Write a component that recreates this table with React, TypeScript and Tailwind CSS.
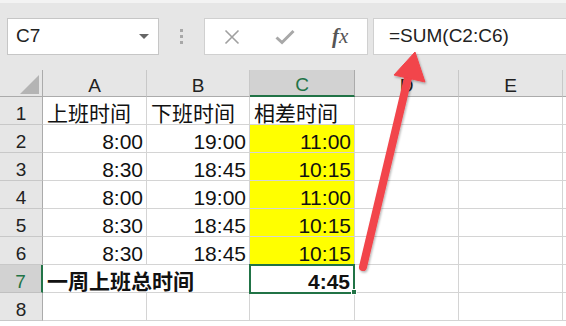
import React from "react";

const FONT = { fontFamily: '"Liberation Sans", "Noto Sans CJK SC", sans-serif' };

const cols = ["A", "B", "C", "D", "E"];

type Row = { n: number; a?: string; b?: string; c?: string; head?: boolean; fill?: boolean };

const rows: Row[] = [
  { n: 1, a: "上班时间", b: "下班时间", c: "相差时间", head: true },
  { n: 2, a: "8:00", b: "19:00", c: "11:00", fill: true },
  { n: 3, a: "8:30", b: "18:45", c: "10:15", fill: true },
  { n: 4, a: "8:00", b: "19:00", c: "11:00", fill: true },
  { n: 5, a: "8:30", b: "18:45", c: "10:15", fill: true },
  { n: 6, a: "8:30", b: "18:45", c: "10:15", fill: true },
  { n: 7 },
  { n: 8 },
];

function Toolbar() {
  return (
    <div className="h-[70px] bg-[#e6e6e6] border-t-[3px] border-[#f3f3f3] flex items-start pt-[15px]">
      <div className="ml-[7px] w-[152px] h-[37px] bg-white border border-[#c6c6c6] flex items-center justify-between pl-[8px] pr-[9px]">
        <span className="text-[19px] text-[#222]">C7</span>
        <svg width="10" height="6" viewBox="0 0 10 6">
          <path d="M0 0 L10 0 L5 5 Z" fill="#666" />
        </svg>
      </div>
      <div className="w-[45px] h-[37px] flex flex-col items-center justify-center gap-[3px]">
        <div className="w-[3px] h-[3px] bg-[#a8a8a8]" />
        <div className="w-[3px] h-[3px] bg-[#a8a8a8]" />
        <div className="w-[3px] h-[3px] bg-[#a8a8a8]" />
      </div>
      <div className="w-[164px] h-[37px] bg-white border border-[#d0d0d0] flex items-center">
        <svg width="16" height="16" viewBox="0 0 16 16" className="ml-[19px]">
          <path d="M1.5 1.5 L14.5 14.5 M14.5 1.5 L1.5 14.5" stroke="#a0a0a0" strokeWidth="1.6" />
        </svg>
        <svg width="20" height="16" viewBox="0 0 20 16" className="ml-[35px]">
          <path d="M1.5 8.5 L7 13.5 L18.5 2" stroke="#a8a8a8" strokeWidth="3" fill="none" />
        </svg>
        <span
          className="ml-[37px] text-[21px] italic text-[#555] leading-none"
          style={{ fontFamily: '"Liberation Serif", serif' }}
        >
          <span className="font-bold">f</span>x
        </span>
      </div>
      <div className="ml-[5px] flex-1 h-[37px] bg-white border border-[#d0d0d0] border-r-0 flex items-center pl-[15px]">
        <span className="text-[19px] text-[#222]">=SUM(C2:C6)</span>
      </div>
    </div>
  );
}

function Arrow() {
  return (
    <svg className="absolute left-0 top-0 pointer-events-none" width="566" height="326" viewBox="0 0 566 326">
      <defs>
        <filter id="sh" x="-20%" y="-20%" width="140%" height="140%">
          <feDropShadow dx="1" dy="1.5" stdDeviation="1.2" floodColor="#000" floodOpacity="0.3" />
        </filter>
      </defs>
      <g filter="url(#sh)" fill="#f2444b" stroke="#f2444b">
        <line x1="363" y1="267" x2="408" y2="78" strokeWidth="8" strokeLinecap="round" />
        <path d="M415 52 L425 82 L394 75 Z" strokeWidth="1" strokeLinejoin="round" />
      </g>
    </svg>
  );
}

const cell =
  "h-[28px] flex items-end border-r border-b border-[#d4d4d4] text-[21px] leading-[21px] text-[#111] whitespace-nowrap";

export default function App() {
  return (
    <div className="relative w-[566px] h-[326px] overflow-hidden bg-white" style={FONT}>
      <Toolbar />
      <div className="grid grid-cols-[43px_104px_103px_105px_104px_104px_1fr]">
        {/* column headers */}
        <div className="h-[27px] bg-[#e6e6e6] border-r border-b border-[#ababab] relative">
          <svg className="absolute left-[20px] top-[5px]" width="19" height="19" viewBox="0 0 19 19">
            <path d="M19 0 L19 19 L0 19 Z" fill="#b4b4b4" />
          </svg>
        </div>
        {cols.map((c) => (
          <div
            key={c}
            className={
              c === "C"
                ? "h-[27px] flex items-end justify-center bg-[#d2d2d2] border-r border-[#ababab] border-b-2 border-b-[#217346] text-[#217346] text-[19px] leading-[19px] pb-px"
                : "h-[27px] flex items-end justify-center bg-[#e6e6e6] border-r border-[#c8c8c8] border-b border-b-[#ababab] text-[#222] text-[19px] leading-[19px] pb-[1px]"
            }
          >
            {c}
          </div>
        ))}
        <div className="h-[27px] bg-[#e6e6e6] border-b border-[#ababab]" />

        {rows.map((r) => (
          <React.Fragment key={r.n}>
            <div
              className={
                r.n === 7
                  ? "h-[28px] flex items-end justify-center bg-[#d2d2d2] border-r-2 border-r-[#217346] border-b border-[#c0c0c0] text-[#217346] text-[19px] leading-[19px] pb-[1px]"
                  : "h-[28px] flex items-end justify-center bg-[#e6e6e6] border-r border-[#ababab] border-b border-b-[#c8c8c8] text-[#222] text-[19px] leading-[19px] pb-[1px]"
              }
            >
              {r.n}
            </div>
            {r.n === 7 ? (
              <>
                <div className={`${cell} col-span-2 font-bold pl-[4px]`}>一周上班总时间</div>
                <div className="h-[28px] border-b border-r border-[#d4d4d4] relative">
                  <div className="absolute left-[-1px] top-[-1px] w-[106px] h-[30px] flex items-end justify-end border-2 border-[#217346] text-[21px] leading-[21px] font-bold text-[#111] pr-[3px]">
                    4:45
                  </div>
                  <div className="absolute right-[-3px] bottom-[-3px] w-[6px] h-[6px] bg-[#217346] border border-white" />
                </div>
              </>
            ) : (
              <>
                <div className={`${cell} ${r.head ? "justify-start pl-[4px]" : "justify-end pr-[3px]"}`}>{r.a}</div>
                <div className={`${cell} ${r.head ? "justify-start pl-[4px]" : "justify-end pr-[3px]"}`}>{r.b}</div>
                <div
                  className={`${cell} ${r.head ? "justify-start pl-[4px]" : "justify-end pr-[3px]"} ${
                    r.fill ? "bg-[#ffff00]" : ""
                  }`}
                >
                  {r.c}
                </div>
              </>
            )}
            <div className={cell} />
            <div className={cell} />
            <div className="h-[28px] border-b border-[#d4d4d4]" />
          </React.Fragment>
        ))}
      </div>
      <Arrow />
    </div>
  );
}
